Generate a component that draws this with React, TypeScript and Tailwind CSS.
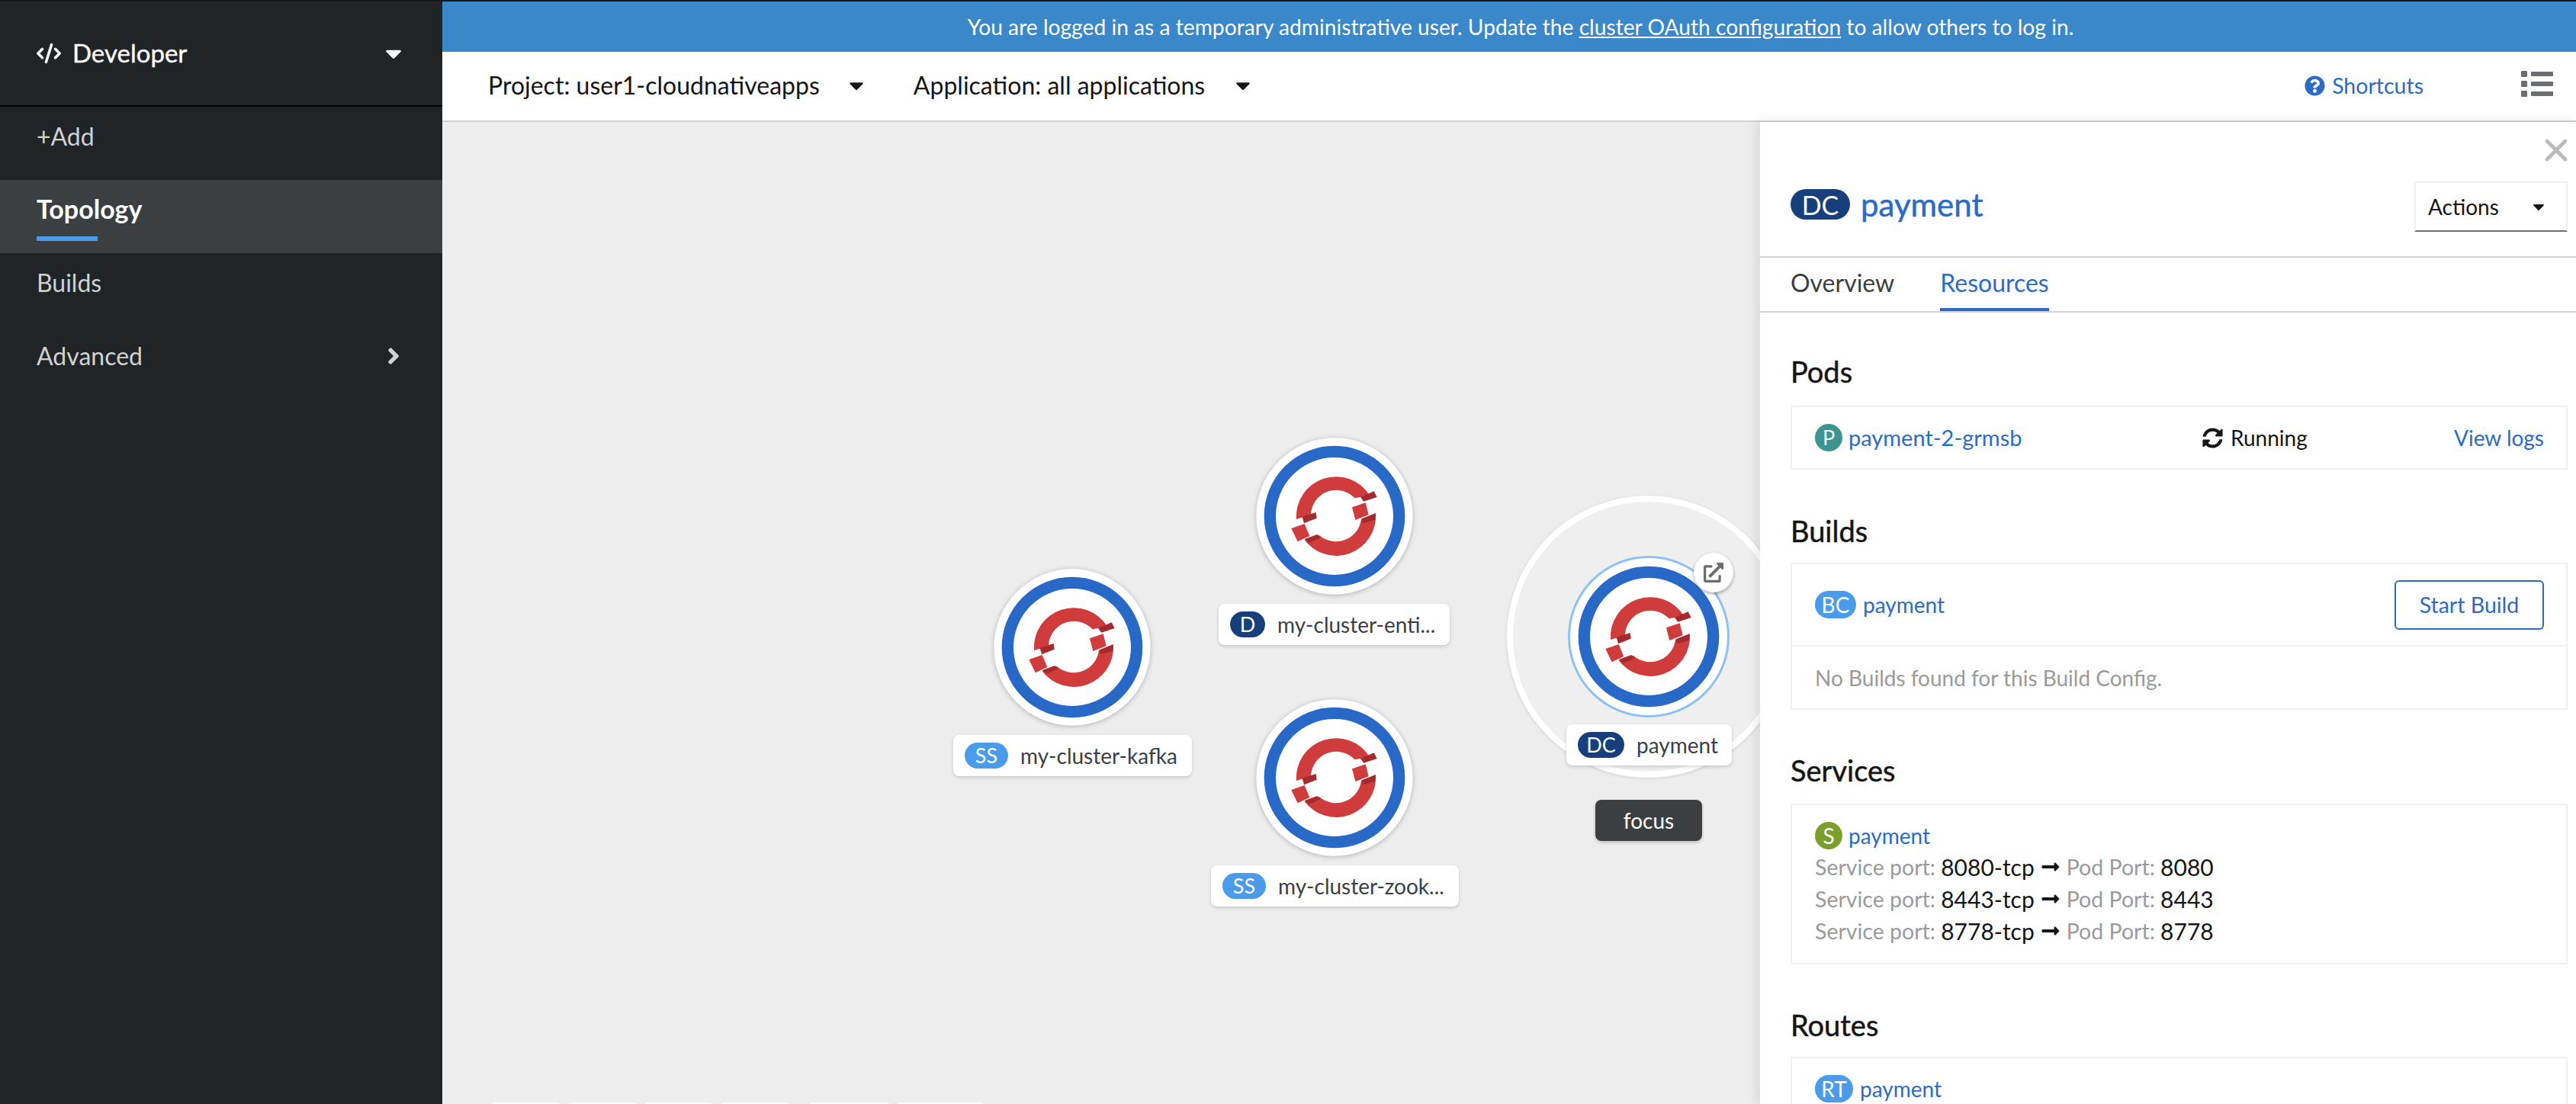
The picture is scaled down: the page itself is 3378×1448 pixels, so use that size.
import React from "react";
import { FaCaretDown, FaAngleRight, FaQuestionCircle, FaSyncAlt, FaLongArrowAltRight, FaExternalLinkAlt } from "react-icons/fa";
import { CodeXml, X } from "lucide-react";

function NodeIcon({ className }: { className: string }) {
  return (
    <svg viewBox="81 41 618 618" className={className}>
      <circle cx="390" cy="350" r="308" fill="#fff" />
      <circle cx="390" cy="350" r="254" fill="none" stroke="#2868c6" strokeWidth="46" />
      <path d="M240 362 A156 156 0 0 1 528 268 L470 279 A100 100 0 0 0 297 343 L262 355 Z" fill="#d03c3c" />
      <path d="M552 340 A156 156 0 0 1 272 444 L330 425 A100 100 0 0 0 495 362 Z" fill="#d03c3c" />
      <polygon points="459,315 512,297 524,345 472,365" fill="#d03c3c" />
      <polygon points="220,398 272,380 292,428 245,450" fill="#d03c3c" />
      <polygon points="492,275 545,252 557,275 505,292" fill="#a52a2e" />
      <polygon points="263,352 317,335 320,358 270,378" fill="#a52a2e" />
      <polygon points="497,360 552,338 550,365 500,378" fill="#a52a2e" />
      <polygon points="272,440 322,422 335,435 290,455" fill="#a52a2e" />
    </svg>
  );
}

function Badge({ text, className }: { text: string; className: string }) {
  return <span className={"flex items-center justify-center rounded-full text-white shrink-0 " + className}>{text}</span>;
}

function NodeLabel({ badge, badgeClass, text, className }: { badge: string; badgeClass: string; text: string; className: string }) {
  return (
    <div className={"absolute h-[54px] flex items-center bg-white rounded-lg shadow-[0_2px_4px_rgba(0,0,0,0.16)] pl-[15px] gap-[16px] text-[28px] text-[#3c3f42] whitespace-nowrap " + className}>
      <Badge text={badge} className={"h-[34px] text-[27px] " + badgeClass} />
      <span>{text}</span>
    </div>
  );
}

function Heading({ children, className }: { children: React.ReactNode; className: string }) {
  return <h2 className={"text-[38px] leading-[41px] h-[44px] text-[#151515] [-webkit-text-stroke:0.5px_#151515] " + className}>{children}</h2>;
}

function PortRow({ a, b }: { a: string; b: string }) {
  return (
    <div className="h-[42px] flex items-center text-[28.5px] text-[#9a9a9a] whitespace-pre">
      Service port:&nbsp;<span className="text-[#151515] text-[30px]">{a}-tcp</span>
      <FaLongArrowAltRight className="text-[#151515] text-[26px] mx-[8px]" />
      Pod Port:&nbsp;<span className="text-[#151515] text-[30px]">{b}</span>
    </div>
  );
}

function ListIcon() {
  return (
    <svg width="42" height="34" viewBox="0 0 42 34" fill="#6a6e73">
      <rect x="0" y="0" width="8" height="8" rx="1" /><rect x="13" y="1" width="29" height="6" rx="1" />
      <rect x="0" y="13" width="8" height="8" rx="1" /><rect x="13" y="14" width="29" height="6" rx="1" />
      <rect x="0" y="26" width="8" height="8" rx="1" /><rect x="13" y="27" width="29" height="6" rx="1" />
    </svg>
  );
}

const navItem = "h-[96px] flex items-center pl-[48px] pb-[18px] text-[32px] text-[#d2d2d2]";

export default function App() {
  return (
    <div className="w-[3378px] h-[1448px] flex flex-col overflow-hidden bg-white [font-family:Lato,'Liberation_Sans',sans-serif]">
      <div className="h-[2px] bg-[#151515] shrink-0" />
      <div className="flex flex-1 min-h-0">
        {/* Sidebar */}
        <aside className="w-[580px] shrink-0 bg-[#212427] flex flex-col">
          <div className="h-[138px] border-b-2 border-black pl-[48px] pr-[47px] flex items-center text-white">
            <CodeXml size={34} strokeWidth={2.5} className="mr-[14px] -ml-[1px]" />
            <span className="text-[33px] flex-1 [-webkit-text-stroke:0.4px_#fff]">Developer</span>
            <FaCaretDown className="text-[34px]" />
          </div>
          <div className={navItem}>+Add</div>
          <div className={navItem + " relative bg-[#3c3f42] !text-[34px] !pb-[21px] text-white font-bold"}>
            Topology
            <span className="absolute left-[48px] bottom-[16px] w-[80px] h-[6px] bg-[#4a9bea]" />
          </div>
          <div className={navItem}>Builds</div>
          <div className={navItem + " pr-[47px] justify-between"}>
            Advanced
            <FaAngleRight className="text-[34px]" />
          </div>
        </aside>

        <div className="flex-1 min-w-0 flex flex-col">
          {/* Banner */}
          <div className="h-[66px] shrink-0 bg-[#3a87c9] text-white text-[28.2px] flex items-center justify-center pl-[30px]">
            <span>You are logged in as a temporary administrative user. Update the <span className="underline">cluster OAuth configuration</span> to allow others to log in.</span>
          </div>
          {/* Top bar */}
          <div className="h-[92px] shrink-0 bg-white border-b-2 border-[#d2d2d2] flex items-center pb-[2px] pl-[60px] pr-[30px] text-[32px] text-[#151515]">
            <span>Project: user1-cloudnativeapps</span>
            <FaCaretDown className="ml-[33px] text-[30px]" />
            <span className="ml-[60px]">Application: all applications</span>
            <FaCaretDown className="ml-[35px] text-[30px]" />
            <div className="ml-auto flex items-center gap-[9px] text-[#2b6bc6] text-[28.5px]">
              <FaQuestionCircle className="text-[27px]" />
              <span>Shortcuts</span>
            </div>
            <div className="ml-[128px] -mt-[4px]"><ListIcon /></div>
          </div>

          <div className="flex flex-1 min-h-0">
            {/* Canvas */}
            <main className="flex-1 relative overflow-hidden bg-[#ededed]">
              <div className="absolute left-[1396px] top-[490px] w-[370px] h-[370px] rounded-full bg-[#efefef] border-[8px] border-white shadow-[0_1px_4px_rgba(0,0,0,0.12)]" />
              <NodeIcon className="absolute left-[723px] top-[586px] w-[206px] h-[206px] drop-shadow-[0_1px_3px_rgba(0,0,0,0.25)]" />
              <NodeIcon className="absolute left-[1067px] top-[414px] w-[206px] h-[206px] drop-shadow-[0_1px_3px_rgba(0,0,0,0.25)]" />
              <NodeIcon className="absolute left-[1067px] top-[757px] w-[206px] h-[206px] drop-shadow-[0_1px_3px_rgba(0,0,0,0.25)]" />
              <div className="absolute left-[1476px] top-[569px] w-[212px] h-[212px] rounded-full bg-white border-[3px] border-[#8bc1f7]" />
              <NodeIcon className="absolute left-[1479px] top-[572px] w-[206px] h-[206px]" />
              <div className="absolute left-[1641px] top-[565px] w-[52px] h-[52px] rounded-full bg-white flex items-center justify-center text-[#6a6e73] shadow-[0_2px_4px_rgba(0,0,0,0.35)]">
                <FaExternalLinkAlt className="text-[26px]" />
              </div>
              <NodeLabel badge="SS" badgeClass="w-[57px] bg-[#4a9bea]" text="my-cluster-kafka" className="left-[670px] top-[804px] w-[313px]" />
              <NodeLabel badge="D" badgeClass="w-[46px] bg-[#173f7c]" text="my-cluster-enti..." className="left-[1018px] top-[632px] w-[303px]" />
              <NodeLabel badge="SS" badgeClass="w-[57px] bg-[#4a9bea]" text="my-cluster-zook..." className="left-[1008px] top-[975px] w-[325px]" />
              <NodeLabel badge="DC" badgeClass="w-[61px] bg-[#173f7c]" text="payment" className="left-[1474px] top-[790px] w-[217px]" />
              <div className="absolute left-[1512px] top-[889px] w-[140px] h-[54px] rounded-lg bg-[#3c3f42] text-white text-[28px] flex items-center justify-center shadow-[0_2px_4px_rgba(0,0,0,0.2)]">focus</div>
              {[[65, 90], [165, 90], [265, 89], [365, 89], [482, 105], [597, 113]].map(([x, w]) => (
                <div key={x} className="absolute top-[1286px] h-[20px] bg-white rounded-t" style={{ left: x, width: w }} />
              ))}
            </main>

            {/* Side panel */}
            <section className="w-[1070px] shrink-0 relative z-10 bg-white overflow-hidden shadow-[-4px_0_14px_rgba(0,0,0,0.1)]">
              <X size={48} strokeWidth={2.4} className="absolute right-[2px] top-[13px] text-[#b8bbbe]" />
              <header className="h-[178px] border-b-2 border-[#d2d2d2] pl-[40px] pr-[11px] pt-[78px] flex items-start justify-between">
                <div className="flex items-center gap-[14px] mt-[10px]">
                  <Badge text="DC" className="w-[78px] h-[40px] bg-[#173f7c] text-[34px]" />
                  <span className="text-[42px] leading-[38px] text-[#2b6bc6] [-webkit-text-stroke:0.5px_#2b6bc6]">payment</span>
                </div>
                <div className="w-[201px] h-[66px] border-2 border-[#f0f0f0] border-b-[#6a6e73] flex items-center pl-[16px] pr-[24px] justify-between text-[28px] text-[#151515]">
                  Actions
                  <FaCaretDown className="text-[24px]" />
                </div>
              </header>
              <nav className="h-[72px] border-b-2 border-[#d2d2d2] pl-[40px] flex gap-[60px] text-[32px]">
                <div className="h-[70px] flex items-center border-b-4 border-transparent text-[#3c3f42]">Overview</div>
                <div className="h-[70px] flex items-center border-b-4 border-[#2b6bc6] text-[#2b6bc6]">Resources</div>
              </nav>
              <div className="pl-[40px] pr-[11px] pt-[57px]">
                <Heading className="mb-[21px]">Pods</Heading>
                <div className="h-[84px] mb-[60px] border-2 border-[#f0f0f0] pl-[30px] pr-[29px] grid grid-cols-[508px_1fr_auto] items-center text-[28px]">
                  <div className="flex items-center gap-[8px] text-[#2b6bc6] text-[29px]">
                    <Badge text="P" className="w-[36px] h-[36px] bg-[#3d9490] text-[27px]" />
                    payment-2-grmsb
                  </div>
                  <div className="flex items-center gap-[10px] text-[#151515]">
                    <FaSyncAlt className="text-[27px]" />
                    Running
                  </div>
                  <div className="text-[#2b6bc6]">View logs</div>
                </div>

                <Heading className="mb-[18px]">Builds</Heading>
                <div className="h-[193px] mb-[59px] border-2 border-[#f0f0f0] text-[28px]">
                  <div className="h-[108px] border-b-2 border-[#f0f0f0] pl-[30px] pr-[29px] flex items-center justify-between text-[#2b6bc6]">
                    <div className="flex items-center gap-[9px]">
                      <Badge text="BC" className="w-[54px] h-[36px] bg-[#4a9bea] text-[28px]" />
                      payment
                    </div>
                    <div className="w-[196px] h-[65px] border-2 border-[#2b6bc6] rounded-md flex items-center justify-center text-[28.5px]">Start Build</div>
                  </div>
                  <div className="h-[81px] pl-[30px] flex items-center text-[#9a9a9a]">No Builds found for this Build Config.</div>
                </div>

                <Heading className="mb-[20px]">Services</Heading>
                <div className="h-[211px] mb-[59px] border-2 border-[#f0f0f0] pl-[30px] pt-[22px] text-[28px]">
                  <div className="flex items-center gap-[8px] text-[#2b6bc6] h-[36px] mb-[2px]">
                    <Badge text="S" className="w-[36px] h-[36px] bg-[#7a9f2b] text-[28px]" />
                    payment
                  </div>
                  <PortRow a="8080" b="8080" />
                  <PortRow a="8443" b="8443" />
                  <PortRow a="8778" b="8778" />
                </div>

                <Heading className="mb-[18px]">Routes</Heading>
                <div className="h-[120px] border-2 border-[#f0f0f0] pl-[30px] pt-[22px] text-[28px]">
                  <div className="flex items-center gap-[9px] text-[#2b6bc6] h-[36px]">
                    <Badge text="RT" className="w-[50px] h-[36px] bg-[#4a9bea] text-[28px]" />
                    payment
                  </div>
                </div>
              </div>
            </section>
          </div>
        </div>
      </div>
    </div>
  );
}
